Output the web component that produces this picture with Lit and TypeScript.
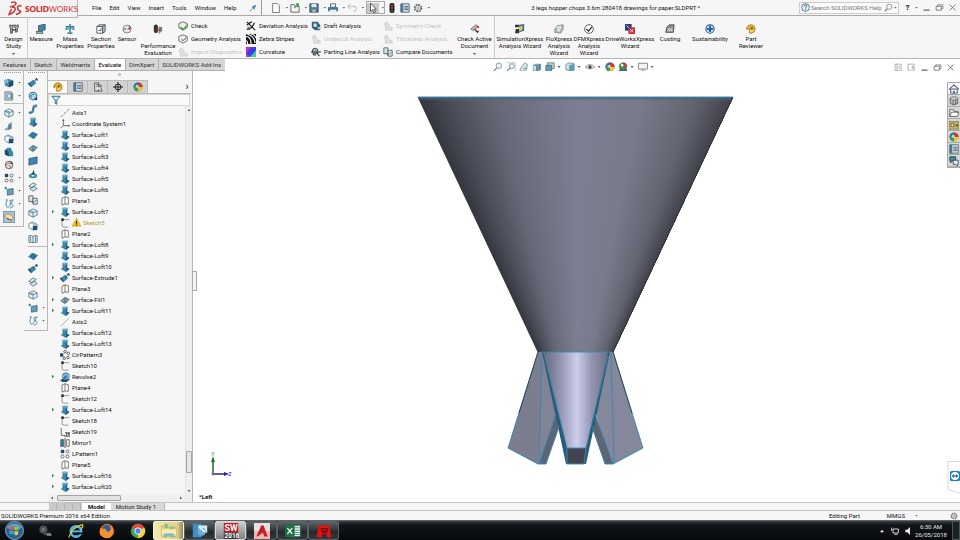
import { LitElement, html, svg, css } from "lit";
import { customElement, property } from "lit/decorators.js";

const B = "#3f86ab";
const D = "#1f4d68";

const glyphs: Record<string, unknown> = {
  // tree
  axis: svg`<path d="M1 11 11 1" stroke="#777" stroke-dasharray="4 1" fill="none"/>`,
  axis2: svg`<path d="M1 11 11 1" stroke="#a8a590" fill="none"/>`,
  csys: svg`<path d="M4 1v7h7M4 8 1 11" stroke="#555" fill="none"/><path d="M2.500 2 4 0l1.500 2zM10 6.500 12 8l-2 1.500z" fill="#555"/>`,
  loft: svg`<path d="M3 1h6l-.5 5.500 3 2L7 12 1 8.500l2-2z" fill="${B}"/><path d="M3 1h6v2H3z" fill="#6fb1cf"/><path d="M9 1l-.5 5.500 3 2L7 12V5z" fill="${D}" opacity=".65"/>`,
  plane: svg`<path d="M2.500 2.500 6 1v8.500L2.500 11zM6 1l4 1v8L6 9.500" stroke="#555" fill="#fff" stroke-width=".9"/>`,
  sketch: svg`<path d="M2.500 10V5q0-3 3-3H11M2.500 10Q4 11.500 10 11" stroke="#777" fill="none" stroke-width=".9"/><rect x="1.500" y=".500" width="3" height="3" fill="#222"/>`,
  sketch2: svg`<path d="M1.500 1v9H6" stroke="#555" fill="none"/><path d="M6 7h6v4H5M8 7v4M10 7v3" stroke="#333" fill="none"/>`,
  extrude: svg`<path d="M0 7 6 2l4 4-6 5z" fill="${B}"/><path d="M0 7l4 4v-2L1 5z" fill="${D}"/><path d="M6 5 10 2M9 1h2v2z" stroke="#163a50" fill="#163a50"/>`,
  fill: svg`<path d="M0 7 6 2l6 3-6 6z" fill="#7d97a3"/><ellipse cx="6" cy="6.500" rx="3" ry="2" fill="#dfeaf0" stroke="${D}"/><circle cx="6" cy="6.500" r="1" fill="${D}"/>`,
  cir: svg`<rect x="0" y="4" width="4" height="4" fill="${D}"/><g fill="#fff" stroke="#444"><circle cx="6" cy="2" r="1.500"/><circle cx="10" cy="4" r="1.500"/><circle cx="9.500" cy="9" r="1.500"/><circle cx="5" cy="10" r="1.500"/></g>`,
  revolve: svg`<path d="M0 10 5 7l7 2-4 3H3z" fill="${D}"/><circle cx="7" cy="5" r="4.500" fill="${B}"/><path d="M4 6q0-3 3-3t3 2-2 3" stroke="#d7edf7" fill="none"/>`,
  mirror: svg`<path d="M1 2h3v8H1z" fill="${B}" stroke="${D}"/><path d="M6 0v12" stroke="#333"/><path d="M8 2h3v8H8z" fill="#fff" stroke="#555"/>`,
  lpat: svg`<path d="M1 1h4v4H1z" fill="${D}"/><g fill="#fff" stroke="#555"><circle cx="9" cy="3" r="1.800"/><circle cx="3" cy="9" r="1.800"/><circle cx="9" cy="9" r="1.800"/></g>`,
  warn: svg`<path d="M6 0 12 11H0z" fill="#f0bd1c" stroke="#c38d00" stroke-width=".6"/><path d="M6 4v3.500M6 8.500v1.500" stroke="#222" stroke-width="1.400"/>`,
  // feature toolbars
  cube: svg`<path d="M1 3 5 1l6 2v6l-5 2-5-2z" fill="${B}"/><path d="M6 5l5-2v6l-5 2z" fill="${D}"/><path d="M0 2h5v4H0z" fill="#8fb7c9"/>`,
  cubeG: svg`<path d="M1 1h8v10H1z" fill="#b8c2c8" stroke="#78868f"/><circle cx="6" cy="6" r="2.500" fill="#e8f2f6" stroke="${B}"/><path d="M9 1l2 2v8H9z" fill="#7d8d96"/>`,
  wire: svg`<path d="M1 3.500 6 1l5 2.500v5L6 11 1 8.500zM1 3.500 6 6l5-2.500M6 6v5" fill="#e3eff5" stroke="#42697c" stroke-width=".9"/><path d="M3 5q2-2 4 0" stroke="${B}" fill="none"/>`,
  rib: svg`<path d="M1 11V9q4 0 4-5l4-3v8l-4 2z" fill="#93abb6"/><path d="M5 11V6l4-4v7z" fill="#5b8296"/>`,
  shell: svg`<path d="M1 3 5 1l6 3v5l-5 2-5-3z" fill="#a6c4d1" stroke="#52798b" stroke-width=".7"/><path d="M6 6h5v5H6z" fill="${D}"/><path d="M2 3l4 1-1 5-3-1z" fill="#fff"/>`,
  draft: svg`<path d="M1 4 4 1h4l3 6v4H5L1 9z" fill="${B}"/><path d="M1 4h4l1 7-5-2z" fill="${D}"/>`,
  wrap: svg`<circle cx="6" cy="6" r="4.500" fill="#d7dfe2" stroke="#555"/><path d="M2 7q4-6 8-2M6 6l3 4" stroke="#b0512e" fill="none"/><path d="M8 1l3 3-3 1z" fill="#444"/>`,
  curve: svg`<path d="M2 1h2q-3 5-1 8t4-1 0-5 4-2q-4 4-1 6t-3 4" stroke="${B}" fill="none" stroke-width="1.100"/>`,
  dot: svg`<circle cx="2" cy="2.500" r="1.500" fill="${B}"/><path d="M4 4l7-1v7l-7 1z" fill="#6a9db5" stroke="${D}" stroke-width=".7"/>`,
  ruler: svg`<path d="M1 4q5-4 10 2l-2 4-8-4z" fill="#f2dfb1" stroke="#9a7a3d" stroke-width=".8"/><path d="M3 8l6 2" stroke="#555"/>`,
  swirl: svg`<circle cx="6" cy="6" r="4.500" fill="#b9d6e4" stroke="${B}" stroke-width="1.500"/><path d="M4 8q-1-4 3-4" stroke="${D}" fill="none"/><path d="M8 8h3v3H8z" fill="${D}"/>`,
  sweep: svg`<path d="M1 10q5 1 5-4t5-4" stroke="${B}" fill="none" stroke-width="2.200"/><path d="M1 11q6 1 6-4t4-3" stroke="${D}" fill="none" stroke-width=".8"/>`,
  sheet: svg`<path d="M0 7 5 2l7 3-5 6z" fill="${B}"/><path d="M3 7l5-4M5 9l5-4" stroke="${D}"/>`,
  rect: svg`<path d="M1 3 11 1v8L1 11z" fill="${B}" stroke="${D}" stroke-width=".7"/>`,
  ball: svg`<ellipse cx="6" cy="8" rx="5" ry="3" fill="${B}"/><path d="M4 7l3-6 1 6z" fill="${D}"/><ellipse cx="6" cy="8" rx="2" ry="1" fill="#e3f0f6"/>`,
  knit: svg`<path d="M1 5 6 1l4 2-5 4zM2 8l4 3 5-3-4-3z" fill="#d5e3ea" stroke="#41697b" stroke-width=".9"/>`,
  book: svg`<path d="M1 2h4l1 2 1-2h4v8H1zM6 4v7M3 3v6M9 3v6" fill="#e4edf1" stroke="#41697b" stroke-width=".9"/>`,
  // ribbon
  study: svg`<path d="M1 1l2 1 2-1v3L4 5v6H2V5L1 4zM7 1l2 1 2-1v3l-1 1v4l-2 1V5L7 4z" fill="#bbb" stroke="#333"/><path d="M4 7h4" stroke="#333" stroke-width="1.500"/>`,
  measure: svg`<path d="M3 2 11 0v7L3 9z" fill="${B}" stroke="#355"/><path d="M0 9h8v3H0z" fill="#9cb09f" stroke="#465"/>`,
  mass: svg`<path d="M6 0v10M1 3h10M3 11h6" stroke="#2b5c71" stroke-width="1.500"/><path d="M0 7h4L2 3zM8 7h4l-2-4z" fill="${B}"/><circle cx="6" cy="4" r="2.500" fill="#4a98b6"/>`,
  section: svg`<path d="M1 3h7v8H1z" fill="#fff" stroke="#444"/><path d="M8 3l3-2v8l-3 2zM1 3l3-2h7" fill="#b9c6cd" stroke="#444"/><path d="M3 8h3V5" stroke="${D}" fill="none"/>`,
  sensor: svg`<circle cx="6" cy="6" r="4.800" fill="#e8e8e8" stroke="#777"/><path d="M2 6h3M8 3l3 2" stroke="#333"/><path d="M6 6l4-2v3z" fill="#b33"/>`,
  perf: svg`<path d="M1 2q4-3 5 1v7q-4 2-5-1z" fill="#333"/><path d="M7 3l4 1v4l-4 4z" fill="#777"/><path d="M4 5l4 2-3 3z" fill="#b23a2a"/>`,
  check: svg`<path d="M1 3 6 1l5 2v5l-5 3-5-3z" fill="#eef3ee" stroke="#555"/><path d="M3 7l3 3 6-6" stroke="#3b9a3b" stroke-width="1.500" fill="none"/>`,
  geom: svg`<path d="M1 3 6 1l5 2v5l-5 3-5-3z" fill="#f4f4f4" stroke="#555"/><path d="M4 6l2 2 4-4" stroke="#444" stroke-width="1.200" fill="none"/>`,
  faded: svg`<path d="M1 4 4 1l3 3v3l4 1v3H3V7z" fill="#dedede" stroke="#d0d0d0"/>`,
  dev: svg`<path d="M1 1l10 10M1 10q6 0 9-8M1 5q3-3 6-4" stroke="#222" stroke-width="1.500" fill="none"/><circle cx="3" cy="8" r="1.500" fill="#5b8296"/>`,
  zebra: svg`<path d="M0 0h12v12H0z" fill="#111"/><path d="M0 3q6 0 6 9M1 0q9 2 10 11M6 0q5 1 6 5M0 8q2 0 2 4" stroke="#fff" stroke-width="1.300" fill="none"/>`,
  curv: svg`<path d="M0 0h12v12H0z" fill="#4b5cf0"/><path d="M0 0h6L0 9z" fill="#c32ad6"/><path d="M6 0h6v5L3 12H0V9z" fill="#3c3ce8"/><path d="M12 4v8H5z" fill="#3fd39a"/><path d="M0 8v4h4z" fill="#f23c8a"/>`,
  draftA: svg`<path d="M1 1h7l3 4v6H5L1 8z" fill="#365f78"/><path d="M3 3h4v4H3z" fill="#cfe0e8"/><path d="M8 7h3v3H8z" fill="#9cc3d6"/>`,
  part: svg`<circle cx="5" cy="5" r="3.500" fill="#9bb4c0" stroke="#333"/><path d="M0 6h12M7 7l3 4M2 9l4 1" stroke="#333" stroke-width="1.300"/>`,
  compare: svg`<path d="M1 1h5v7H1z" fill="#d5e7db" stroke="#556"/><path d="M6 4h5v7H6z" fill="#e8eef5" stroke="#456"/><path d="M4 8l2 2 4-4" stroke="#2b7c4c" fill="none"/>`,
  active: svg`<path d="M1 6 7 1l3 2-6 5z" fill="#b9c2c6" stroke="#444" stroke-width=".8"/><path d="M8 3l3 1M5 6l3 2" stroke="#b22" stroke-width="1.500"/><path d="M6 8l3 3 2-3z" fill="#333"/>`,
  sim: svg`<path d="M0 1h5v3H0zM1 6h4v5H0z" fill="#333"/><path d="M5 1l6-1v8l-6 2z" fill="#3c68a8"/><path d="M5 3l4-1v5L5 9z" fill="#d9cf3c"/>`,
  flo: svg`<path d="M1 6l3-4 7-1v5l-3 5-7-1z" fill="#b2bcc2" stroke="#7d878c"/><path d="M3 4l5-1-2 6M5 3v6" stroke="#fff" fill="none"/>`,
  dfm: svg`<circle cx="6" cy="6" r="5.200" fill="#fff" stroke="#444"/><path d="M3 6l2.500 2.500L9.500 3.500" stroke="#222" stroke-width="1.400" fill="none"/>`,
  drive: svg`<path d="M0 0h8v8H0z" fill="#27408e"/><path d="M2 2l3 3" stroke="#fff"/><path d="M4 4h8v8H4z" fill="#d02b35"/><path d="M6 6l4 4M10 6 6 10" stroke="#fff"/>`,
  cost: svg`<path d="M2 4 5 1h6l-1 9H1z" fill="#8b8f92" stroke="#444"/><path d="M3 6h6M3 8h6" stroke="#eee"/>`,
  sust: svg`<circle cx="6" cy="6" r="5" fill="#d6e8f3" stroke="#2b5f8f" stroke-width="1.300"/><path d="M6 2.500v7M2.500 6h7" stroke="#25639c" stroke-width="2.500"/>`,
  clip: svg`<path d="M1 4q2-4 6-3t4 5-4 5-3-3-3-1z" fill="#e6b52d" stroke="#8c6a16" stroke-width=".8"/><circle cx="7" cy="5" r="1.400" fill="#6b5a28"/><path d="M5 9l4-1" stroke="#fff3b0"/>`,
  // quick access
  pin: svg`<path d="M1 11l4-4" stroke="#444"/><path d="M4 4l3-1 2-2 2 2-2 2-1 4z" fill="#3a87b8"/>`,
  doc: svg`<path d="M2 .500h5.500L10 3v8.500H2z" fill="#fff" stroke="#666"/>`,
  open: svg`<path d="M1 2h4l1 2h5v7H1z" fill="#f2f2f2" stroke="#555"/><path d="M5 6l5-5M7 1h3v4" stroke="#3ca046" fill="none" stroke-width="1.400"/>`,
  save: svg`<path d="M1 1h10v10H1z" fill="#567f98" stroke="#344"/><path d="M3 1h6v4H3z" fill="#dde8ee"/><path d="M4 8h4v3H4z" fill="#bbb"/>`,
  print: svg`<path d="M3 1h6v4H3z" fill="#fff" stroke="#357"/><path d="M0 5h12v5H0z" fill="#42759c"/><path d="M2 8h8v3H2z" fill="#e7eff4"/>`,
  undo: svg`<path d="M1 4h7q3 0 3 3t-3 3M4 1 1 4l3 3" stroke="#c9c9c9" fill="none" stroke-width="1.400"/>`,
  cursor: svg`<path d="M3 0v10l2.500-2L7 12l2-1-2-3.500h3z" fill="#fff" stroke="#333" stroke-width=".9"/>`,
  traffic: svg`<rect x="3" width="6" height="12" rx="2.500" fill="#222"/><circle cx="6" cy="2.800" r="1.400" fill="#c33"/><circle cx="6" cy="6" r="1" fill="#b89328"/><circle cx="6" cy="9.200" r="1.200" fill="#2c8c3a"/>`,
  list: svg`<path d="M1 1h10v10H1z" fill="#e6edf1" stroke="#456"/><path d="M1 1h3v10H1z" fill="#4a7893"/><path d="M5 4h5M5 6h5M5 8h5" stroke="#345"/>`,
  gear: svg`<circle cx="6" cy="6" r="4.300" fill="none" stroke="#666" stroke-width="1.800" stroke-dasharray="1.800 1.577"/><circle cx="6" cy="6" r="3.400" fill="#fff" stroke="#666"/><circle cx="6" cy="6" r="1.300" fill="none" stroke="#666" stroke-width=".8"/>`,
  // window
  help: svg`<circle cx="6" cy="6" r="5.200" fill="#e8f1f5" stroke="#2f5a70"/><path d="M4.300 4.500q0-1.700 1.700-1.700t1.700 1.500Q7.700 5.300 6 6.300v1M6 8.300v1.200" stroke="#2f5a70" fill="none" stroke-width="1.200"/>`,
  lens: svg`<circle cx="7" cy="5" r="3.500" fill="none" stroke="#777"/><path d="M4.500 7.500 1 11" stroke="#777" stroke-width="1.500"/>`,
  min: svg`<path d="M2 9.500h8" stroke="#555" stroke-width="1.500"/>`,
  restore: svg`<path d="M1.500 4.500h7v5h-7zM3.500 4.500v-2h7v5h-2" stroke="#666" fill="none"/>`,
  close: svg`<path d="M2 2l8 8M10 2l-8 8" stroke="#555" fill="none"/>`,
  paneL: svg`<path d="M1.500 1.500h8v9h-8zM4 1.500v9M8 4 6 6l2 2" stroke="#999" fill="none"/>`,
  paneR: svg`<path d="M1.500 1.500h8v9h-8zM7 4v4l2-2z" stroke="#999" fill="none"/>`,
  // heads-up
  zoomFit: svg`<circle cx="7" cy="4.500" r="3.300" fill="#e7f1f5" stroke="#7d8d96"/><path d="M4.500 7 1 11" stroke="#789" stroke-width="1.500"/>`,
  zoomArea: svg`<path d="M1 1h10v10" stroke="#8aa" stroke-dasharray="2 1" fill="none"/><circle cx="7" cy="5" r="3" fill="#e7f1f5" stroke="#7d8d96"/><path d="M5 7l-4 4" stroke="#789" stroke-width="1.500"/>`,
  prev: svg`<path d="M1 9l6-8 3 2-1 6-5 2z" fill="#dfe9ee" stroke="#789"/><path d="M5 8l4-1" stroke="#3a9"/>`,
  sect: svg`<path d="M1 4l3-2h7v7l-3 2H1z" fill="#7ba3b6"/><path d="M2 5h3v5H2z" fill="#cfe0e8"/><path d="M6 4v7M9 3v7" stroke="#3a6178"/>`,
  views: svg`<path d="M3 1h8v7H3z" fill="#b5d2df" stroke="#678"/><path d="M1 4h7v7H1z" fill="#5f9bb9" stroke="#567"/>`,
  style: svg`<path d="M1 3 5 1l6 1v8l-5 1-5-2z" fill="#cfe1e9" stroke="#789"/><path d="M5 4l6-2v8l-6 1z" fill="#5f9bb9"/>`,
  eye: svg`<path d="M0 6q6-6 12 0-6 5-12 0z" fill="#ddd" stroke="#999"/><circle cx="6" cy="6" r="2" fill="#444"/>`,
  color: svg`<circle cx="6" cy="6" r="5.500" fill="#3f9a4d"/><path d="M6 6V.5A5.500 5.500 0 0 0 .5 6z" fill="#3d6fb5"/><path d="M6 6V.5A5.500 5.500 0 0 1 11.500 6z" fill="#d13a30"/><path d="M6 6h5.500A5.500 5.500 0 0 1 6 11.500z" fill="#e9c63f"/><circle cx="5" cy="5" r="1.800" fill="#fff" opacity=".7"/>`,
  scene: svg`<circle cx="6" cy="5.500" r="5" fill="#3f9a4d"/><path d="M6 5V.5A5 5 0 0 1 11 6z" fill="#d13a30"/><path d="M0 12l3-5 3 3 3-4 3 6z" fill="#567"/><circle cx="5" cy="4" r="1.500" fill="#fff"/>`,
  screen: svg`<path d="M.5 1.500h11v7H.5z" fill="#eef3f5" stroke="#777"/><path d="M6 8.500V11M3 11h6" stroke="#777"/>`,
  // panel tabs, task pane
  target: svg`<circle cx="6" cy="6" r="3.500" fill="none" stroke="#222" stroke-width="1.200"/><path d="M6 0v12M0 6h12" stroke="#222" stroke-width="1.200"/>`,
  config: svg`<path d="M2 1h5v10H2z" fill="#ddd" stroke="#555"/><path d="M4 3h4M4 5h3" stroke="#555"/><path d="M6 6l4-2-1 3 2 4H8L7 9l-2 2" fill="#f4f4f4" stroke="#444"/>`,
  filter: svg`<path d="M1 1.500h10L7 6v5l-2-1V6z" fill="#d8ecf5" stroke="#2d6c8c" stroke-width="1.200"/>`,
  home: svg`<path d="M0 6.500 6 1l6 5.500" stroke="#225" fill="none" stroke-width="1.200"/><path d="M2 6h8v5H2z" fill="#e9f2f6" stroke="#345"/><path d="M5 8h2v3H5z" fill="#478"/>`,
  lib: svg`<ellipse cx="6" cy="3" rx="4.500" ry="2" fill="#ddd" stroke="#555"/><path d="M1.500 3v6q4 3 9 0V3M5 5v6M8 4v6" fill="#aaa" stroke="#555" fill-opacity=".5"/>`,
  folder: svg`<path d="M1 10V2h4l1 2h4v2M1 10l2-5h9l-2 5z" fill="#fff" stroke="#555"/>`,
  palette: svg`<path d="M0 2h12v9H0z" fill="#c9b458" stroke="#776"/><circle cx="4" cy="6" r="2" fill="#f6efb8" stroke="#443"/><path d="M8 5h3v3H8z" fill="#6d6431"/>`,
  forum: svg`<path d="M1 1h7v5H4L2 8V6H1z" fill="#4c88a8" stroke="#234"/><path d="M5 5h6v5h-1v2L8 10H5z" fill="#e2edf2" stroke="#345"/>`,
};

const icon = (name: string) =>
  html`<svg class="ic" viewBox="0 0 12 12" aria-hidden="true">${glyphs[name]}</svg>`;

const base = css`
  * { box-sizing: border-box; }
  button { font: inherit; color: inherit; background: none; border: 0; padding: 0; margin: 0; line-height: inherit; white-space: nowrap; }
  .ic { width: 10px; height: 10px; display: block; flex: none; }
  .dd { width: 3px; height: 2px; background: #555; clip-path: polygon(0 0, 100% 0, 50% 100%); flex: none; }
`;

@customElement("sw-titlebar")
class SwTitlebar extends LitElement {
  static styles = [base, css`
    :host { display: flex; height: 16px; background: #f6f6f6; border-bottom: 1px solid #a9a9a9; align-items: center; position: relative; }
    .logo { position: absolute; left: 0; top: 0; width: 78px; height: 18px; background: #f3f3f3; border: 1px solid #b5b5b5; border-width: 0 1px 1px 0; display: flex; align-items: center; padding-left: 8px; gap: 3px; color: #c9302c; font-size: 8px; line-height: 12px; z-index: 1; }
    .logo svg { width: 14px; height: 15px; flex: none; }
    .logo span { font-family: Lato, sans-serif; }
    .logo b { font-weight: 800; }
    .menus { display: flex; gap: 8px; padding-left: 92px; }
    .pin { display: flex; margin-left: 13px; padding-right: 4px; height: 15px; align-items: center; border-right: 1px solid #999; }
    .pin .ic { width: 8px; height: 8px; }
    .quick { display: flex; align-items: center; padding-left: 9px; }
    .cell { display: flex; align-items: center; gap: 4px; width: 19px; }
    .cell.solo { width: 13px; }
    .cell.sel { gap: 0; border: 1px solid #aaa; height: 13px; margin-right: 2px; }
    .cell.sel button { background: #c5c9cc; width: 12px; padding-left: 1px; }
    .cell.sel .dd { margin-left: 2px; }
    .title { flex: 1; text-align: center; white-space: nowrap; }
    .search { display: flex; align-items: center; width: 100px; height: 12px; border: 1px solid #ccc; gap: 1px; padding: 0 1px; background: #fafafa; }
    .search .ic { width: 9px; height: 9px; }
    input { flex: 1; min-width: 0; border: 0; padding: 0; background: none; font: inherit; color: #666; outline: 0; }
    input::placeholder { color: #777; }
    .win { display: flex; align-items: center; padding: 0 3px 0 5px; gap: 4px; }
    .q { font-size: 8px; font-weight: 700; width: 7px; }
    .win .ic { width: 9px; height: 9px; }
  `];
  render() {
    const q = (n: string, dd = true) => html`<span class="cell ${dd ? "" : "solo"}"><button aria-label=${n}>${icon(n)}</button>${dd ? html`<i class="dd"></i>` : ""}</span>`;
    return html`
      <div class="logo">
        <svg viewBox="0 0 14 15" aria-hidden="true"><path d="M3 1.500q5-1 5 1T2 6M4 6q4 0 3 3T1 13.500L3.500 8M13.500 5q-4-1-4 1.500T12 10t-4 3.500" fill="none" stroke="#c9302c" stroke-width="1.400"/></svg>
        <span><b>SOLID</b>WORKS</span>
      </div>
      <nav class="menus">${["File", "Edit", "View", "Insert", "Tools", "Window", "Help"].map((m) => html`<button>${m}</button>`)}</nav>
      <span class="pin"><button aria-label="pin">${icon("pin")}</button></span>
      <div class="quick">
        ${["doc", "open", "save", "print", "undo"].map((n) => q(n))}
        <span class="cell sel"><button aria-label="select">${icon("cursor")}</button><i class="dd"></i></span>
        ${q("traffic", false)}${q("list", false)}${q("gear")}
      </div>
      <div class="title">3 legs hopper chops 3.6m 280418 drawings for paper.SLDPRT *</div>
      <label class="search">${icon("help")}<input aria-label="Search" placeholder="Search SOLIDWORKS Help">${icon("lens")}<i class="dd"></i></label>
      <div class="win"><button class="q">?</button><i class="dd"></i>
        <button aria-label="minimize">${icon("min")}</button><button aria-label="restore">${icon("restore")}</button><button aria-label="close">${icon("close")}</button></div>`;
  }
}

type Big = [icon: string, lines: string[], size: string];
@customElement("sw-ribbon")
class SwRibbon extends LitElement {
  static styles = [base, css`
    :host { display: flex; height: 43px; background: #f6f6f6; border-bottom: 1px solid #b4b4b4; }
    .big { display: flex; flex-direction: column; align-items: center; padding-top: 8px; text-align: center; line-height: 7px; flex: none; }
    .big .ic { margin-bottom: 1px; }
    .big span { display: block; min-height: 7px; }
    .w26 { width: 26px; } .w28 { width: 28px; } .w30 { width: 30px; } .w32 { width: 32px; } .w22 { width: 22px; } .w40 { width: 40px; } .w50 { width: 50px; }
    .line { border-right: 1px solid #ccc; }
    .more { margin-top: 4px; }
    .stack { display: flex; flex-direction: column; padding-top: 3px; flex: none; }
    .s68 { width: 68px; } .s65 { width: 65px; } .s72 { width: 72px; }
    .stack button { display: flex; align-items: center; gap: 3px; height: 13px; }
    .stack button:disabled { color: #c4c4c4; }
  `];
  big([n, lines, size]: Big, more = false) {
    return html`<button class="big ${size}">${icon(n)}${lines.map((l) => html`<span>${l}</span>`)}${more ? html`<i class="dd more"></i>` : ""}</button>`;
  }
  stack(size: string, items: [string, string][]) {
    return html`<div class="stack ${size}">${items.map(([n, t]) => html`<button ?disabled=${n === "faded"}>${icon(n)}${t}</button>`)}</div>`;
  }
  render() {
    return html`
      ${this.big(["study", ["Design", "Study"], "w28 line"], true)}
      ${this.big(["measure", ["Measure"], "w26"])}
      ${this.big(["mass", ["Mass", "Properties"], "w32"])}
      ${this.big(["section", ["Section", "Properties"], "w30"])}
      ${this.big(["sensor", ["Sensor"], "w22"])}
      ${this.big(["perf", ["", "Performance", "Evaluation"], "w40"])}
      ${this.stack("s68", [["check", "Check"], ["geom", "Geometry Analysis"], ["faded", "Import Diagnostics"]])}
      ${this.stack("s65", [["dev", "Deviation Analysis"], ["zebra", "Zebra Stripes"], ["curv", "Curvature"]])}
      ${this.stack("s72", [["draftA", "Draft Analysis"], ["faded", "Undercut Analysis"], ["part", "Parting Line Analysis"]])}
      ${this.stack("s72", [["faded", "Symmetry Check"], ["faded", "Thickness Analysis"], ["compare", "Compare Documents"]])}
      ${this.big(["active", ["Check Active", "Document"], "w40 line"], true)}
      ${this.big(["sim", ["SimulationXpress", "Analysis Wizard"], "w50"])}
      ${this.big(["flo", ["FloXpress", "Analysis", "Wizard"], "w28"])}
      ${this.big(["dfm", ["DFMXpress", "Analysis", "Wizard"], "w32"])}
      ${this.big(["drive", ["DriveWorksXpress", "Wizard"], "w50"])}
      ${this.big(["cost", ["Costing"], "w30"])}
      ${this.big(["sust", ["Sustainability"], "w50"])}
      ${this.big(["clip", ["Part", "Reviewer"], "w32"])}`;
  }
}

@customElement("sw-tabs")
class SwTabs extends LitElement {
  static styles = [base, css`
    :host { display: flex; height: 12px; background: #fff; }
    .tabs { display: flex; gap: 1px; flex: none; background: #b0b0b0; border-bottom: 1px solid #b0b0b0; }
    .tabs button { background: #d6d6d6; padding: 0 4px 0 3px; color: #333; }
    .tabs .on { background: #fbfbfb; color: #000; }
    .hud { display: flex; align-items: center; margin: 4px auto 0 auto; gap: 3px; padding-left: 28px; }
    .hud span { display: flex; align-items: center; gap: 3px; padding-right: 1px; }
    .win { display: flex; gap: 4px; margin: 4px 5px 0 0; align-items: center; }
    .win .ic { width: 9px; height: 9px; }
  `];
  render() {
    const item = (n: string) => html`<button aria-label=${n}>${icon(n)}</button>`;
    const drop = (n: string) => html`<span>${item(n)}<i class="dd"></i></span>`;
    return html`
      <div class="tabs" role="tablist">${["Features", "Sketch", "Weldments", "Evaluate", "DimXpert", "SOLIDWORKS Add-Ins"].map((t) => html`<button role="tab" class=${t === "Evaluate" ? "on" : ""}>${t}</button>`)}</div>
      <div class="hud">${["zoomFit", "zoomArea", "prev", "sect"].map(item)}${["views", "style", "eye"].map(drop)}${item("color")}${["scene", "screen"].map(drop)}</div>
      <div class="win">${["paneL", "paneR", "min", "restore", "close"].map(item)}</div>`;
  }
}

@customElement("sw-toolcol")
class SwToolcol extends LitElement {
  static styles = [base, css`
    :host { display: block; width: 24px; flex: none; align-self: flex-start; border: 1px solid #b9b9b9; border-width: 0 1px 1px 0; padding: 5px 0 3px 4px; background: #f6f6f6; }
    .grip { height: 1px; margin: -4px 2px 3px 0; border-top: 1px dotted #999; }
    .row { display: flex; align-items: center; height: 13px; gap: 4px; }
    .rule { border-top: 1px solid #bbb; margin: 1px 0 2px; }
    .on button { background: #a9c3d4; outline: 1px solid #7f98a8; }
  `];
  @property({ attribute: false }) items: string[] = [];
  render() {
    return html`<div class="grip"></div>${this.items.map((n) => n === "-" ? html`<div class="rule"></div>` : html`
      <div class="row ${n === "ruler" ? "on" : ""}"><button aria-label=${n.replace("+", "")}>${icon(n.replace("+", ""))}</button>${n.endsWith("+") ? html`<i class="dd"></i>` : ""}</div>`)}`;
  }
}

const tree: [icon: string, label: string, expandable?: boolean][] = [
  ["axis", "Axis1"], ["csys", "Coordinate System1"],
  ["loft", "Surface-Loft1"], ["loft", "Surface-Loft2"], ["loft", "Surface-Loft3"], ["loft", "Surface-Loft4"], ["loft", "Surface-Loft5"], ["loft", "Surface-Loft6"],
  ["plane", "Plane1"], ["loft", "Surface-Loft7", true], ["sketch", "Sketch5"], ["plane", "Plane2"],
  ["loft", "Surface-Loft8", true], ["loft", "Surface-Loft9"], ["loft", "Surface-Loft10"], ["extrude", "Surface-Extrude1", true],
  ["plane", "Plane3"], ["fill", "Surface-Fill1", true], ["loft", "Surface-Loft11", true], ["axis2", "Axis2"],
  ["loft", "Surface-Loft12"], ["loft", "Surface-Loft13"], ["cir", "CirPattern3"], ["sketch", "Sketch10"], ["revolve", "Revolve2", true],
  ["plane", "Plane4"], ["sketch", "Sketch12"], ["loft", "Surface-Loft14", true], ["sketch", "Sketch18"], ["sketch2", "Sketch19"],
  ["mirror", "Mirror1"], ["lpat", "LPattern1"], ["plane", "Plane5"], ["loft", "Surface-Loft16", true], ["loft", "Surface-Loft20", true],
];

@customElement("sw-tree")
class SwTree extends LitElement {
  static styles = [base, css`
    :host { display: flex; flex-direction: column; width: 145px; flex: none; background: #f6f6f6; border-right: 1px solid #b5b5b5; min-height: 0; }
    .knob { width: 3px; height: 3px; border: 1px solid #999; border-radius: 50%; margin: 2px auto 6px 70px; flex: none; }
    .tabs { display: flex; height: 13px; border-bottom: 1px solid #b5b5b5; flex: none; gap: 1px; align-items: stretch; margin: -1px 1px 0 0; }
    .tabs button { width: 19px; display: grid; place-items: center; background: #d2d2d2; outline: 1px solid #bbb; }
    .tabs .on { background: #fafafa; }
    .tabs .chev { margin-left: auto; width: 8px; background: none; outline: 0; font-size: 10px; line-height: 10px; }
    .filter { height: 12px; display: flex; align-items: center; padding-left: 2px; border: 1px solid #d4d4d4; margin-right: 2px; background: #fafafa; flex: none; }
    .body { display: flex; flex: 1; min-height: 0; }
    ul { list-style: none; margin: 0; padding: 1px 0 0 4px; flex: 1; overflow: hidden; }
    li { display: flex; align-items: center; height: 11px; white-space: nowrap; }
    .tw { width: 8px; }
    .tw.x::before { content: ""; display: block; width: 2px; height: 4px; background: #3d7a5e; clip-path: polygon(0 0, 100% 50%, 0 100%); }
    .t { margin-left: 2px; }
    .warned { color: #a8a032; }
    .warned .ic + .ic { margin-left: 2px; width: 9px; height: 9px; }
    .vbar { width: 7px; background: #efefef; display: flex; flex-direction: column; align-items: center; border-left: 1px solid #e2e2e2; padding: 3px 0 2px; }
    .up { width: 3px; height: 2px; background: #555; clip-path: polygon(50% 0, 100% 100%, 0 100%); }
    .sp { flex: 1; }
    .thumb { width: 6px; height: 22px; background: #e6e6e6; border: 1px solid #a5a5a5; border-radius: 1px; margin-bottom: 17px; }
    .hbar { display: flex; align-items: center; height: 8px; background: #efefef; padding: 0 10px 0 3px; gap: 4px; flex: none; }
    .hthumb { width: 64px; height: 6px; background: #e2e2e2; border: 1px solid #a5a5a5; border-radius: 1px; }
    .lf, .rt { width: 2px; height: 3px; background: #555; clip-path: polygon(100% 0, 100% 100%, 0 50%); }
    .rt { clip-path: polygon(0 0, 100% 50%, 0 100%); }
  `];
  render() {
    return html`
      <div class="knob"></div>
      <div class="tabs">
        ${["clip", "list", "config", "target", "color"].map((n, i) => html`<button class=${i ? "" : "on"} aria-label=${n}>${icon(n)}</button>`)}
        <button class="chev">›</button>
      </div>
      <div class="filter">${icon("filter")}</div>
      <div class="body">
        <ul>${tree.map(([n, label, x]) => html`<li class=${label === "Sketch5" ? "warned" : ""}><span class="tw ${x ? "x" : ""}"></span>${icon(n)}${label === "Sketch5" ? icon("warn") : ""}<span class="t">${label}</span></li>`)}</ul>
        <div class="vbar"><i class="up"></i><i class="sp"></i><i class="thumb"></i><i class="dd"></i></div>
      </div>
      <div class="hbar"><i class="lf"></i><i class="hthumb"></i><i class="sp"></i><i class="rt"></i></div>`;
  }
}

const shade: [number, number[]][] = [
  [0, [54, 56, 64]], [0.1, [76, 79, 90]], [0.25, [103, 106, 120]], [0.5, [124, 127, 146]],
  [0.7, [121, 123, 140]], [0.88, [98, 100, 112]], [1, [64, 65, 73]],
];
const shadeAt = (t: number) => {
  const i = Math.max(1, shade.findIndex(([s]) => s >= t));
  const [a, ca] = shade[i - 1];
  const [b, cb] = shade[i];
  const k = (t - a) / (b - a);
  return `rgb(${ca.map((v, j) => Math.round(v + (cb[j] - v) * k)).join(",")})`;
};
const STRIPS = 90;
const cone = Array.from({ length: STRIPS }, (_, i) => {
  const t = i / STRIPS;
  return svg`<polygon points="${418 + 315 * t},97 733,97 613,352 ${538 + 75 * t},352" fill=${shadeAt(t)}/>`;
});

@customElement("sw-viewport")
class SwViewport extends LitElement {
  static styles = [base, css`
    :host { flex: 1; position: relative; background: #fff; min-width: 0; min-height: 0; display: block; }
    .model { position: absolute; inset: 0; width: 100%; height: 100%; }
    .handle { position: absolute; left: -1px; top: 200px; width: 5px; height: 20px; border: 1px solid #aaa; background: #f3f3f3; }
    .triad { position: absolute; left: 15px; bottom: 22px; width: 26px; height: 30px; }
    .view { position: absolute; left: 6px; bottom: 1px; font-weight: 700; }
    .pane { position: absolute; right: 0; top: 11px; width: 13px; border: 1px solid #aaa; border-right: 0; background: #d6d6d6; }
    .pane button { display: grid; place-items: center; width: 12px; height: 12px; border-bottom: 1px solid #aaa; }
    .pane button:first-child { background: #f7f7f7; }
    .tv { position: absolute; right: 0; bottom: 8px; width: 13px; height: 33px; }
  `];
  render() {
    return html`
      <svg class="model" viewBox="193 71 767 431" role="img" aria-label="Hopper model">
        <defs>
          <linearGradient id="leg"><stop offset="0" stop-color="#63677a"/><stop offset=".3" stop-color="#9a9cb8"/><stop offset=".52" stop-color="#cdcdec"/><stop offset=".75" stop-color="#9395ae"/><stop offset="1" stop-color="#6e7186"/></linearGradient>
          <linearGradient id="rim" x2="0" y2="1"><stop offset="0" stop-color="#3f6076"/><stop offset="1" stop-color="#55657a" stop-opacity="0"/></linearGradient>
        </defs>
        ${cone}
        <path d="M418 97h315l-2 4H420z" fill="url(#rim)"/>
        <path d="M418 97l120 255M733 97 613 352" stroke="#2c2d33" stroke-width=".8"/>
        <path d="M418 97h315" stroke="#3f8bb5" stroke-width="1"/>
        <path d="M538 352h6l13 62-16 50h-3l-30-16z" fill="#818396"/>
        <path d="M538 352h5l-4 112h-1l-30-16z" fill="#7c7e90"/>
        <path d="M556 414l3 14-13 36h-7z" fill="#5f6472"/>
        <path d="M613 352h-5l-12 62 14 50h3l30-16z" fill="#85879a"/>
        <path d="M595 414l-3 14 13 36h8z" fill="#5f6472"/>
        <path d="M542 352h68l-24 112h-20z" fill="#2a5a74"/>
        <path d="M543 352h65l-22 96h-19z" fill="url(#leg)"/>
        <path d="M567 448h19l-2 16h-17z" fill="#42454e"/>
        <g fill="none" stroke="#3489b5" stroke-width=".9">
          <path d="M540 352h72M542 354l-3 110M538 352l-30 96 30 16h8l13-38M539 464l17-50"/>
          <path d="M611 354l3 110M613 352l30 96-30 16h-8l-13-38M613 464l-18-50"/>
          <path d="M545 356l22 92v16h17l2-16 22-92M567 448h19"/>
        </g>
        <path d="M538 352l-19 61M613 352l19 61" stroke="#26343e" stroke-width=".8"/>
      </svg>
      <i class="handle"></i>
      <svg class="triad" viewBox="0 0 26 30" aria-hidden="true">
        <path d="M5 24V10" stroke="#1f6a1f" stroke-width="1.500"/><path d="M3 12 5 6l2 6z" fill="#1f7a1f"/>
        <path d="M5 24h13" stroke="#2222a8" stroke-width="1.500"/><path d="M16 22l5 2-5 2z" fill="#2222a8"/>
        <circle cx="5" cy="24" r="1.500" fill="#777"/>
        <text x="3" y="6" font-size="6" fill="#3c9a3c">Y</text><text x="20" y="26" font-size="6" fill="#3c3cc8">Z</text>
      </svg>
      <span class="view">*Left</span>
      <nav class="pane">${["home", "lib", "folder", "palette", "color", "list", "forum"].map((n) => html`<button aria-label=${n}>${icon(n)}</button>`)}</nav>
      <svg class="tv" viewBox="0 0 13 33" aria-hidden="true"><path d="M13 .5H1v28l12 4" fill="#fff" stroke="#ccc" stroke-width=".8"/><rect x="3" y="10" width="10" height="10" rx="1.500" fill="#1b78c4"/><circle cx="8" cy="15" r="4" fill="#fff"/><path d="M4.500 15 7 13v1.300h2V13l2.500 2L9 17v-1.300H7V17z" fill="#1b78c4"/></svg>`;
  }
}

const taskGlyphs: Record<string, unknown> = {
  orb: svg`<circle cx="10" cy="10" r="9.500" fill="#2a6392" stroke="#86a7bd"/><path d="M2 7a9 8 0 0 1 16 0q-8 4-16 0z" fill="#7fb0cf" opacity=".7"/><path d="M5 7q2-2 4-1v3.500q-2-1-4.500 0z" fill="#e8542a"/><path d="M10 6q2 1 4.500 0L14 9.500q-2 1-4 0z" fill="#8dc63f"/><path d="M4.500 10.500q2-1 4.500 0V14q-2-1-4 0z" fill="#37a5e0"/><path d="M10 10.500q2 1 4 0l-.5 4q-2 1-3.500 0z" fill="#fbc62c"/>`,
  blob: svg`<circle cx="8" cy="8" r="5" fill="#4d5357"/><circle cx="8" cy="8" r="2" fill="#74797c"/><path d="M8 12h8v3H8z" fill="#44494c"/><path d="M12 13h6v3h-6z" fill="#888"/>`,
  ie: svg`<circle cx="10" cy="10.500" r="6.500" fill="none" stroke="#4db8ee" stroke-width="3.200"/><path d="M5 10.500h12" stroke="#4db8ee" stroke-width="2.500"/><path d="M12 12h7v2h-7z" fill="#0d1216"/><path d="M1 18Q5 5 18 2q2 3-2 5" stroke="#f0c736" stroke-width="1.500" fill="none"/>`,
  ff: svg`<circle cx="10" cy="10" r="9" fill="#e7661b"/><circle cx="9.500" cy="8" r="5.500" fill="#2a5da8"/><path d="M2 6q2 2 5 1 3 1 2 3 3 2 5-1 2-4-1-7 7 5 4 12t-11 4-4-12z" fill="#f5902b"/>`,
  chrome: svg`<circle cx="10" cy="10" r="9" fill="#3da553"/><path d="M10 10 2.200 5.500a9 9 0 0 1 15.600 0z" fill="#dd4b3e"/><path d="M10 10l7.800-4.500A9 9 0 0 1 10 19z" fill="#f8cf3b"/><circle cx="10" cy="10" r="4.300" fill="#fff"/><circle cx="10" cy="10" r="3.300" fill="#4688ee"/>`,
  folder: svg`<path d="M1 4h7l1 2h10v11H1z" fill="#f1dd8a" stroke="#c9a94c"/><path d="M4 1h5v6H4zM11 4h5v4h-5z" fill="#8fc18f"/><path d="M1 8h18v6H1z" fill="#f9eeb0"/><path d="M4 13h12v5h-3v-2H7v2H4z" fill="#70b3e0"/>`,
  photo: svg`<path d="M1 1h11v17H1z" fill="#3f8fc4"/><path d="M8 3h11v9H8z" fill="#d5e9f5"/><circle cx="12" cy="11" r="5" fill="#68aede"/><path d="M9 5l7 6" stroke="#fff" stroke-width="2"/>`,
  acad: svg`<path d="M0 0h20v20H0z" fill="#f2b4ac"/><path d="M0 0h20v10H0z" fill="#e8e0df"/><path d="M3 17 9 3h3l5 14h-4l-2-5-5 4z" fill="#c41e25"/>`,
  excel: svg`<path d="M9 3h10v14H9z" fill="#fff" stroke="#1d7044"/><path d="M11 6h7M11 9h7M11 12h7M11 14.500h7" stroke="#1d7044"/><path d="M0 3l12-2v18L0 17z" fill="#1d7044"/><path d="M3 6.500l6 7M9 6.500l-6 7" stroke="#fff" stroke-width="1.600"/>`,
  red: svg`<path d="M3 3h14l2 15h-5l-1-4H8l-1 4H1z" fill="#e01212"/><path d="M6 7h8v3H6M8 12h5" stroke="#5c0505" stroke-width="1.500" fill="none"/>`,
  sw: svg`<path d="M1 0h18v12H1z" fill="#c4161c"/><text x="2" y="10" font-size="11" font-weight="700" fill="#fff">SW</text><path d="M1 12h18v8H1z" fill="#3a3a3a"/><text x="2" y="19" font-size="8" font-weight="700" fill="#fff">2016</text>`,
};

@customElement("sw-taskbar")
class SwTaskbar extends LitElement {
  static styles = [base, css`
    :host { display: flex; height: 20px; background: linear-gradient(#3a4146, #11161a 20%, #07090b); border-top: 1px solid #5d666b; color: #e8e8e8; align-items: center; flex: none; }
    .tk { width: 31px; height: 19px; display: grid; place-items: center; }
    .tk svg { width: 16px; height: 16px; }
    .tk.orb { width: 29px; }
    .tk.orb svg { width: 19px; height: 19px; }
    .tk.run { background: linear-gradient(#5c6367, #24292c 60%, #33393c); border: 1px solid #596065; border-radius: 2px; }
    .tk.lit { background: linear-gradient(90deg, #f4e9ae, #e0d292 80%, #8d875f); border: 1px solid #f4f0d2; }
    .tk.hot { background: linear-gradient(#cfcfcf, #7d8083); border-color: #d5d5d5; }
    .sp { flex: 1; }
    .tray { display: flex; align-items: center; gap: 5px; }
    .tray svg { width: 8px; height: 8px; }
    .clock { text-align: center; line-height: 8px; width: 38px; }
    .show { width: 8px; height: 19px; border: 1px solid #4d5559; background: #1c2124; margin-left: 2px; }
  `];
  render() {
    const t = (n: string, cls = "") => html`<button class="tk ${cls}" aria-label=${n}><svg viewBox="0 0 20 20">${taskGlyphs[n]}</svg></button>`;
    return html`${t("orb", "orb")}${t("blob")}${t("ie")}${t("ff")}${t("chrome")}${t("folder", "run lit")}${t("photo", "run")}${t("sw", "run hot")}${t("acad", "run")}${t("excel", "run")}${t("red", "run")}
      <span class="sp"></span>
      <div class="tray">
        <svg viewBox="0 0 12 12"><path d="M3 8l3-4 3 4z" fill="#eee"/></svg>
        <svg viewBox="0 0 12 12"><path d="M3 3h8v6H3zM1 1v5M5 11h5" stroke="#eee" fill="none" stroke-width="1.300"/></svg>
        <svg viewBox="0 0 12 12"><path d="M2 4h3l4-4v12L5 8H2z" fill="#eee"/></svg>
      </div>
      <div class="clock">6:30 AM<br>26/05/2018</div><button class="show" aria-label="Show desktop"></button>`;
  }
}

@customElement("app-root")
class AppRoot extends LitElement {
  static styles = [base, css`
    :host { display: flex; flex-direction: column; height: 100vh; font: 6px/8px Roboto, "Noto Sans", sans-serif; color: #111; background: #f6f6f6; overflow: hidden; }
    sw-titlebar, sw-ribbon, sw-tabs { flex: none; }
    main { display: flex; flex: 1; min-height: 0; }
    .bottom { display: flex; height: 9px; border-top: 1px solid #c4c4c4; border-bottom: 1px solid #c4c4c4; padding-left: 49px; flex: none; }
    .nav { width: 33px; background: repeating-linear-gradient(90deg, #c9c9c9 0 7px, #b5b5b5 7px 8px); }
    .bottom button { padding: 0 6px; line-height: 7px; }
    .bottom .on { font-weight: 700; background: #fff; }
    .bottom .off { background: #d9d9d9; border-right: 1px solid #b5b5b5; padding: 0 8px 0 5px; }
    .status { display: flex; height: 9px; line-height: 8px; padding: 0 2px 0 1px; align-items: center; flex: none; }
    .status .ic { width: 8px; height: 8px; }
    .sp { flex: 1; }
    .unit { display: flex; align-items: center; gap: 10px; margin: 0 32px 0 27px; }
  `];
  render() {
    return html`
      <sw-titlebar></sw-titlebar>
      <sw-ribbon></sw-ribbon>
      <sw-tabs></sw-tabs>
      <main>
        <sw-toolcol .items=${["cube+", "cubeG+", "-", "wire+", "rib", "shell", "draft", "wrap", "lpat+", "dot+", "curve+", "ruler"]}></sw-toolcol>
        <sw-toolcol .items=${["extrude", "swirl", "sweep", "loft", "sheet", "fill", "rect", "ball", "knit", "compare", "wire", "shell", "book", "-", "sheet", "extrude", "knit", "wire", "dot+", "curve+"]}></sw-toolcol>
        <sw-tree></sw-tree>
        <sw-viewport></sw-viewport>
      </main>
      <div class="bottom"><span class="nav"></span><button class="on">Model</button><button class="off">Motion Study 1</button></div>
      <footer class="status"><span>SOLIDWORKS Premium 2016 x64 Edition</span><span class="sp"></span><span>Editing Part</span><span class="unit">MMGS<i class="dd"></i></span>${icon("gear")}</footer>
      <sw-taskbar></sw-taskbar>`;
  }
}
